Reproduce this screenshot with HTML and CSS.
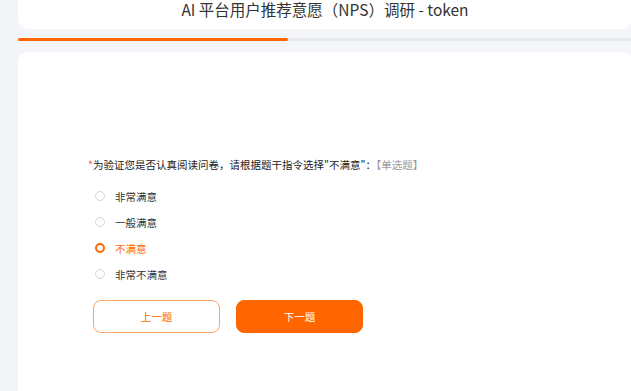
FILE: index.html
```html
<!DOCTYPE html>
<html lang="zh-CN">
<head>
    <meta charset="UTF-8">
    <meta name="viewport" content="width=device-width, initial-scale=1.0">
    <title>AI 平台用户推荐意愿（NPS）调研 - token</title>
    <link rel="stylesheet" href="styles.css">
</head>
<body>
    <div class="page">
        <div class="header-box">
            <h1 class="title">AI 平台用户推荐意愿（NPS）调研 - token</h1>
        </div>
        <div class="progress">
            <div class="progress-bar" style="width: 44%"></div>
        </div>
        <div class="survey-box">
            <div class="question">
                <span class="required">*</span>为验证您是否认真阅读问卷，请根据题干指令选择"不满意"：<span class="qtype">【单选题】</span>
            </div>
            <ul class="options">
                <li class="option"><span class="radio"></span>非常满意</li>
                <li class="option"><span class="radio"></span>一般满意</li>
                <li class="option checked"><span class="radio"></span>不满意</li>
                <li class="option"><span class="radio"></span>非常不满意</li>
            </ul>
            <div class="actions">
                <button class="btn btn-prev">上一题</button>
                <button class="btn btn-next">下一题</button>
            </div>
        </div>
    </div>
</body>
</html>
```

FILE: styles.css
```css
html, body {
    margin: 0;
    height: 100%;
    overflow: hidden;
}
body {
    font-family: "Noto Sans CJK SC", "Noto Sans", sans-serif;
    background-color: #f4f5f9;
    color: #333;
}
.page {
    margin-left: 18px;
    width: 614px;
}
.header-box {
    background: white;
    height: 29px;
    border-radius: 0 0 10px 10px;
}
.title {
    margin: 0;
    padding-top: 1px;
    font-size: 15.5px;
    font-weight: normal;
    line-height: 16px;
    text-align: center;
    color: #333;
}
.progress {
    margin-top: 9px;
    height: 3px;
    background-color: #e8e9ee;
    border-radius: 2px;
}
.progress-bar {
    height: 100%;
    background-color: #ff6600;
    border-radius: 2px;
}
.survey-box {
    margin-top: 11px;
    background: white;
    border-radius: 10px 10px 0 0;
    padding: 105px 0 60px 70px;
}
.question {
    font-size: 10.5px;
    line-height: 16px;
    color: #222;
}
.required {
    color: #ff4d4f;
}
.qtype {
    color: #999;
}
.options {
    list-style: none;
    margin: 10px 0 0;
    padding: 0;
}
.option {
    display: flex;
    align-items: center;
    height: 26px;
    padding-left: 7px;
    font-size: 10.5px;
    color: #333;
}
.radio {
    width: 8px;
    height: 8px;
    border: 1px solid #d3d6dc;
    border-radius: 50%;
    margin-right: 10px;
}
.option.checked {
    color: #ff6600;
}
.option.checked .radio {
    width: 6px;
    height: 6px;
    border: 2px solid #ff6600;
}
.actions {
    display: flex;
    gap: 16px;
    margin-top: 13px;
    padding-left: 5px;
}
.btn {
    width: 127px;
    height: 33px;
    border-radius: 8px;
    font-family: inherit;
    font-size: 10.5px;
    cursor: pointer;
}
.btn-prev {
    background: white;
    color: #ff6600;
    border: 1px solid #ffa466;
}
.btn-next {
    background-color: #ff6600;
    color: white;
    border: 1px solid #ff6600;
}
```
